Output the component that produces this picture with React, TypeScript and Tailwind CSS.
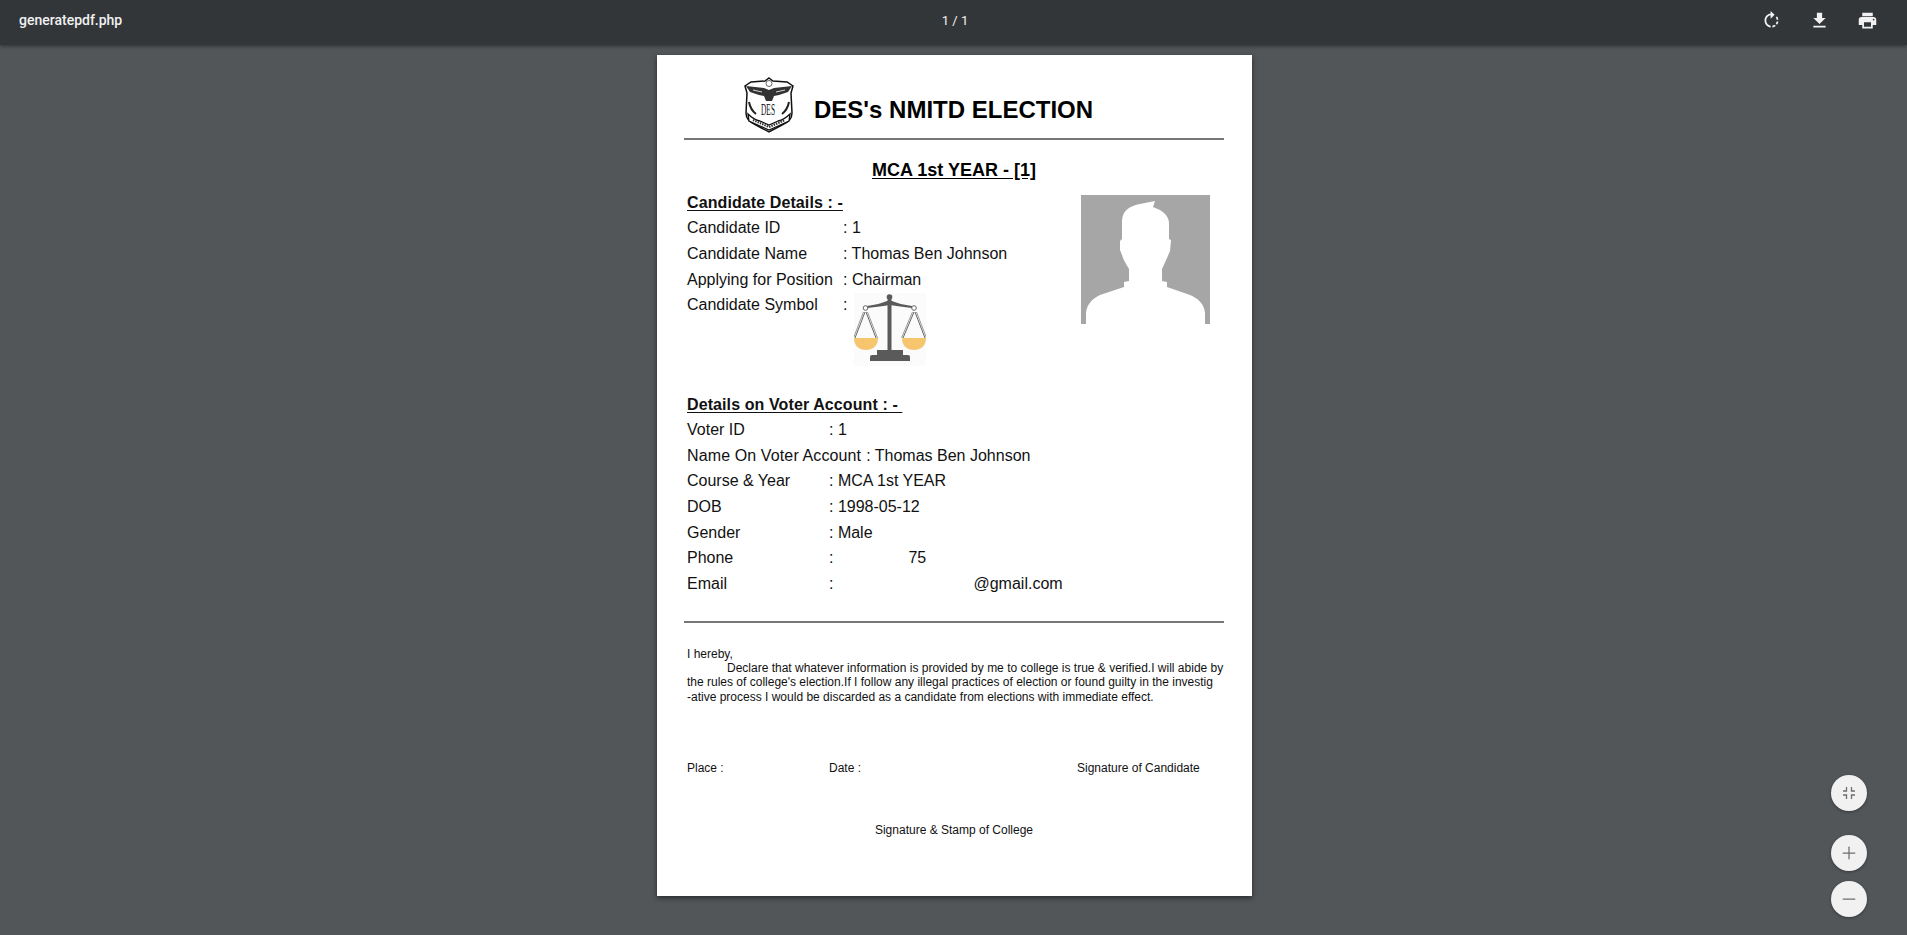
import { Minus, Plus } from "lucide-react";

const candidateRows = [
  { label: "Candidate ID", value: ": 1" },
  { label: "Candidate Name", value: ": Thomas Ben Johnson" },
  { label: "Applying for Position", value: ": Chairman" },
];

function Logo() {
  return (
    <svg width="52" height="56" viewBox="0 0 52 56" className="shrink-0">
      <path
        d="M26 1l4 3 14 1 6 4-2 7 1 20c0 7-5 10-10 12l-13 7-13-7C8 46 3 43 3 36l1-20-2-7 6-4 14-1z"
        fill="#fff"
        stroke="#111"
        strokeWidth="1.500"
      />
      <path d="M3 9l18 2 5 2 5-2 18-2-4 6-9 3-5 1-2 5h-6l-2-5-5-1-9-3z" fill="#333" />
      <circle cx="26" cy="6.500" r="3" fill="none" stroke="#666" strokeWidth="1" />
      <path d="M10 13l9 2M33 15l9-2" stroke="#fff" strokeWidth="0.800" />
      <text
        x="25"
        y="38"
        textAnchor="middle"
        fontFamily="'Liberation Serif', serif"
        fontSize="17"
        fontWeight="400"
        fill="#111"
        textLength="14"
        lengthAdjust="spacingAndGlyphs"
      >
        DES
      </text>
      <path
        d="M5 37c3 3 7 6 12 7l9 4 9-4c5-1 9-4 12-7l-1 7-11 5-9 4-9-4-11-5z"
        fill="#fff"
        stroke="#111"
        strokeWidth="1.300"
      />
      <path d="M10 43l16 7 16-7" fill="none" stroke="#333" strokeWidth="2.200" strokeDasharray="1.500 1" />
      <path d="M6 25c1 5 3 9 7 12M46 25c-1 5-3 9-7 12" fill="none" stroke="#222" strokeWidth="2" />
    </svg>
  );
}

function ScalesIcon() {
  return (
    <svg width="72" height="73" viewBox="9 5 72 73" className="block bg-[#fbfbfb]">
      <g fill="none" stroke="#666" strokeWidth="1">
        <path d="M20 24L10 50M21 24L31 50M69 24L58 50M70 24L80 50" />
        <path d="M18.500 24L8.500 50M22.500 24L32.500 50M67.500 24L56.500 50M71.500 24L81.500 50" stroke="#999" />
      </g>
      <path d="M9 50h24c0 8-5 12-12 12s-12-4-12-12zM57 50h24c0 8-5 12-12 12s-12-4-12-12z" fill="#f6c66f" />
      <path d="M22 18c8-1 15-3 20-5h5c5 2 12 4 20 5v2c-8-1-16-2-22-3-6 1-14 2-23 3z" fill="#5a5a5a" />
      <path d="M42.500 12l.5-3h3l.5 3v51h-4z" fill="#5a5a5a" />
      <circle cx="44.500" cy="9" r="2.800" fill="#5a5a5a" />
      <circle cx="20.500" cy="20" r="2.300" fill="#fff" stroke="#666" />
      <circle cx="69" cy="20" r="2.300" fill="#fff" stroke="#666" />
      <path d="M32 62h26v5h5a2 2 0 0 1 2 2v4H25v-4a2 2 0 0 1 2-2h5z" fill="#5a5a5a" />
    </svg>
  );
}

function ProfilePhoto() {
  return (
    <svg width="129" height="129" viewBox="11 10 129 129" className="block shrink-0">
      <rect x="11" y="10" width="129" height="129" fill="#a6a6a6" />
      <path
        d="M16 139v-11c1-9 6-14 14-18l24-8v-5l5-1V84c-3-5-6-10-7-14l-2-5v-9l2-2V35c1-10 8-14 18-16l15-3-2 6 7 3c6 4 9 8 9 14v15l2 1-1 11-3 7-5 11v12l5 1v5l23 8c9 4 14 9 15 18v11z"
        fill="#fff"
      />
    </svg>
  );
}

function ToolbarIcon({ d }: { d: string }) {
  return (
    <button type="button" className="flex h-10 w-12 items-center justify-center">
      <svg width="21" height="21" viewBox="0 0 24 24" fill="#f1f1f1">
        <path d={d} />
      </svg>
    </button>
  );
}

function Row({ label, value, width }: { label: string; value: string; width: string }) {
  return (
    <div className="flex h-[25.6px] items-center whitespace-nowrap">
      <span className={width}>{label}</span>
      <span>{value}</span>
    </div>
  );
}

function Heading({ children }: { children: string }) {
  return (
    <p className="h-[25.6px] whitespace-pre leading-[25.6px] font-bold tracking-[0.1px] underline underline-offset-2">
      {children}
    </p>
  );
}

export default function App() {
  return (
    <div className="relative flex h-[935px] flex-col overflow-hidden bg-[#525659] font-['Liberation_Sans',sans-serif]">
      <header className="z-10 flex h-[45px] shrink-0 items-center justify-between bg-[#323639] pb-[4px] pl-[19px] pr-4 font-['Roboto',sans-serif] shadow-[0_1px_4px_rgba(0,0,0,0.45)]">
        <span className="w-[500px] text-[14px] font-medium text-[#f1f1f1]">generatepdf.php</span>
        <span className="text-[13px] text-[#f1f1f1]">1 / 1</span>
        <div className="flex w-[500px] justify-end">
          <ToolbarIcon d="M15.55 5.55L11 1v3.07C7.06 4.56 4 7.92 4 12s3.05 7.44 7 7.93v-2.02c-2.84-.48-5-2.94-5-5.91s2.16-5.43 5-5.91V10l4.55-4.45zM19.93 11c-.17-1.39-.72-2.73-1.62-3.89l-1.42 1.42c.54.75.88 1.6 1.02 2.47h2.02zM13 17.9v2.02c1.39-.17 2.74-.71 3.9-1.61l-1.44-1.44c-.75.54-1.59.89-2.46 1.03zm3.89-2.42l1.42 1.41c.9-1.16 1.45-2.5 1.62-3.89h-2.02c-.14.87-.48 1.72-1.02 2.48z" />
          <ToolbarIcon d="M19 9h-4V3H9v6H5l7 7 7-7zM5 18v2h14v-2H5z" />
          <ToolbarIcon d="M19 8H5c-1.660 0-3 1.340-3 3v6h4v4h12v-4h4v-6c0-1.660-1.340-3-3-3zm-3 11H8v-5h8v5zm3-7c-.55 0-1-.45-1-1s.45-1 1-1 1 .45 1 1-.45 1-1 1zm-1-9H6v4h12V3z" />
        </div>
      </header>

      <main className="flex flex-1 justify-center pl-[2px] pt-[10px]">
        <article className="h-[841px] w-[595px] bg-white pl-[27px] pr-[28px] pt-[22px] text-[16px] text-[#111] shadow-[0_2px_5px_rgba(0,0,0,0.5)]">
          <div className="flex h-[56px] items-center pl-[59px]">
            <Logo />
            <h1 className="ml-[19px] mt-[9px] text-[24px] leading-none font-bold text-black">
              DES's NMITD ELECTION
            </h1>
          </div>
          <div className="mt-[5px] h-[2px] bg-[#777]" />

          <h2 className="mt-[18px] text-center text-[18px] leading-6 font-bold text-black underline underline-offset-2">
            MCA 1st YEAR - [1]
          </h2>

          <section className="mt-[8px] flex justify-between pl-[3px] pr-[14px]">
            <div>
              <Heading>Candidate Details : -</Heading>
              {candidateRows.map((r) => (
                <Row key={r.label} label={r.label} value={r.value} width="w-[156px]" />
              ))}
              <div className="flex">
                <span className="h-[25.6px] w-[156px] leading-[25.6px]">Candidate Symbol</span>
                <span className="h-[25.6px] leading-[25.6px]">:</span>
                <div className="ml-[7px] mt-[1px]">
                  <ScalesIcon />
                </div>
              </div>
            </div>
            <div className="pt-[5px]">
              <ProfilePhoto />
            </div>
          </section>

          <section className="mt-[25.5px] pl-[3px]">
            <Heading>Details on Voter Account : - </Heading>
            <Row label="Voter ID" value=": 1" width="w-[142px]" />
            <div className="flex h-[25.6px] items-center whitespace-nowrap">
              <span className="tracking-[0.12px]">Name On Voter Account</span>
              <span className="ml-[5px]">: Thomas Ben Johnson</span>
            </div>
            <Row label="Course & Year" value=": MCA 1st YEAR" width="w-[142px]" />
            <Row label="DOB" value=": 1998-05-12" width="w-[142px]" />
            <Row label="Gender" value=": Male" width="w-[142px]" />
            <div className="flex h-[25.6px] items-center whitespace-nowrap">
              <span className="w-[142px]">Phone</span>
              <span>:</span>
              <span className="ml-[75px]">75</span>
            </div>
            <div className="flex h-[25.6px] items-center whitespace-nowrap">
              <span className="w-[142px]">Email</span>
              <span>:</span>
              <span className="ml-[140px]">@gmail.com</span>
            </div>
          </section>

          <div className="mt-[24px] h-[2px] bg-[#777]" />

          <div className="mt-[24px] whitespace-nowrap pl-[3px] text-[12px] leading-[14.4px]">
            <p>I hereby,</p>
            <p className="pl-[40px]">Declare that whatever information is provided by me to college is true &amp; verified.I will abide by</p>
            <p>the rules of college's election.If I follow any illegal practices of election or found guilty in the investig</p>
            <p>-ative process I would be discarded as a candidate from elections with immediate effect.</p>
          </div>

          <div className="mt-[56.5px] grid grid-cols-[142px_248px_auto] pl-[3px] text-[12px] leading-[14.4px]">
            <span>Place :</span>
            <span>Date :</span>
            <span>Signature of Candidate</span>
          </div>

          <p className="mt-[48px] text-center text-[12px] leading-[14.4px]">Signature &amp; Stamp of College</p>
        </article>
      </main>

      <div className="absolute left-[1831px] top-[775px] flex flex-col">
        <button type="button" className="flex h-9 w-9 items-center justify-center rounded-full bg-[#f1f1f1] shadow-[0_1px_3px_rgba(0,0,0,0.35)]">
          <svg width="16" height="16" viewBox="0 0 16 16" fill="none" stroke="#6e6e6e" strokeWidth="1.300">
            <path d="M5.500 2v4H2M10.500 2v4H14M5.500 14v-4H2M10.500 14v-4H14" />
          </svg>
        </button>
        <button type="button" className="mt-6 flex h-9 w-9 items-center justify-center rounded-full bg-[#f1f1f1] shadow-[0_1px_3px_rgba(0,0,0,0.35)]">
          <Plus className="h-5 w-5 text-[#6e6e6e]" strokeWidth={1.5} />
        </button>
        <button type="button" className="mt-[10px] flex h-9 w-9 items-center justify-center rounded-full bg-[#f1f1f1] shadow-[0_1px_3px_rgba(0,0,0,0.35)]">
          <Minus className="h-5 w-5 text-[#6e6e6e]" strokeWidth={1.5} />
        </button>
      </div>
    </div>
  );
}
